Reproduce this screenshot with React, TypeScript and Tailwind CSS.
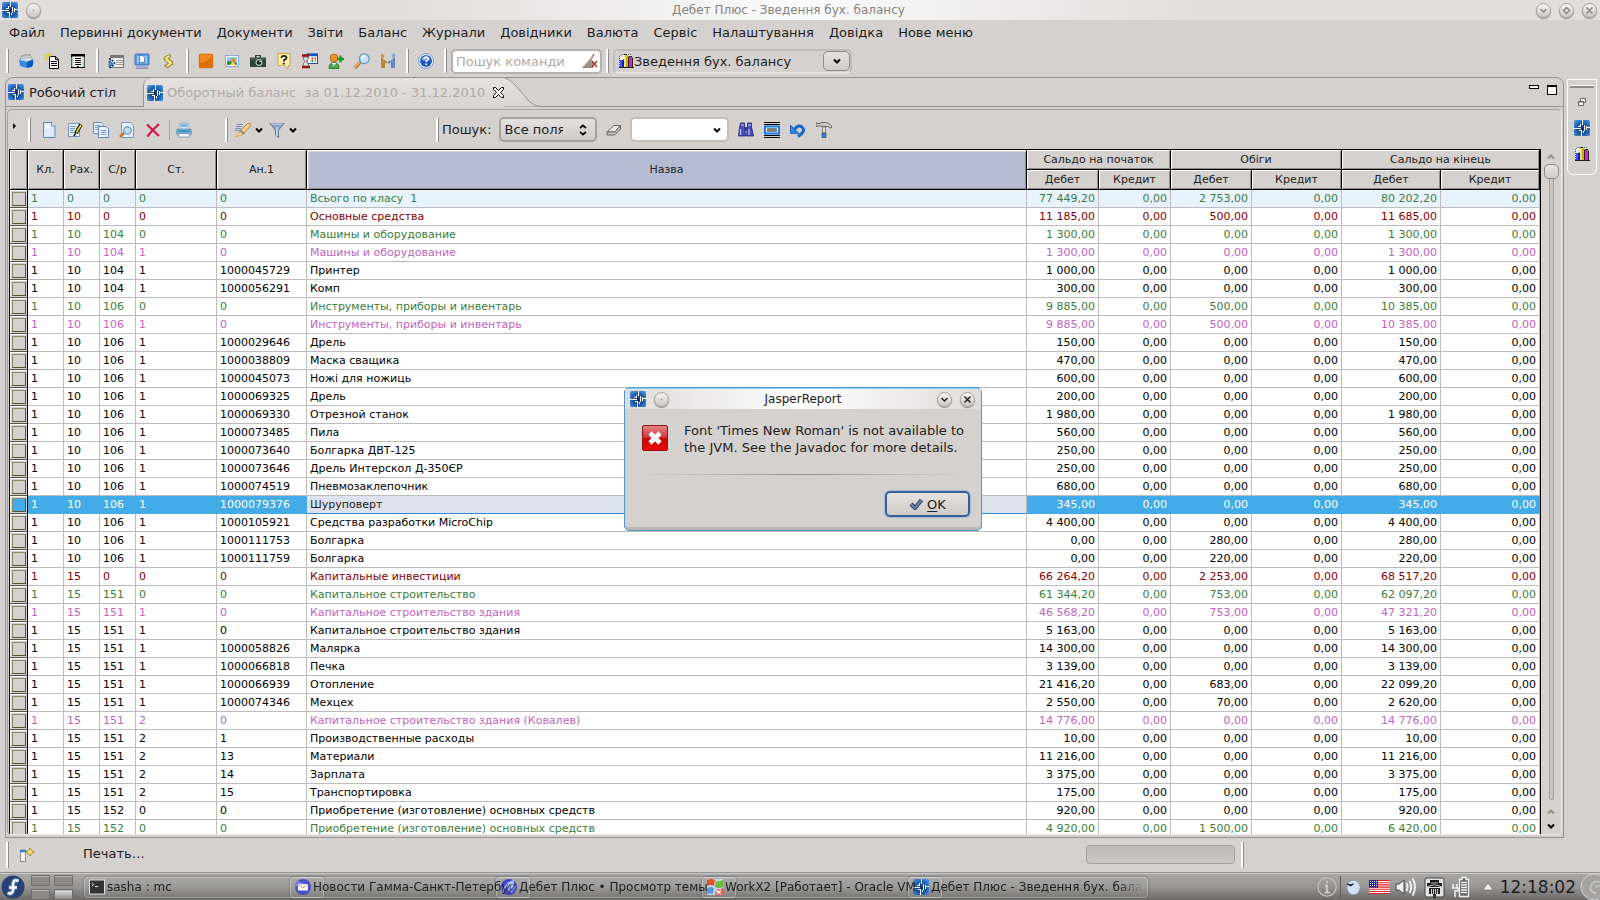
import { useState, type ReactNode } from 'react'

type Tone = 'g' | 'r' | 'p' | 'k'
type Row = [Tone, string, string, string, string, string, string, string, string, string]

// tone, account, subaccount, article, analytic, name, opening debit, turnover debit, closing debit, class
const rows: Row[] = [
  ['g', '0', '0', '0', '0', 'Всього по класу  1', '77 449,20', '2 753,00', '80 202,20', '1'],
  ['r', '10', '0', '0', '0', 'Основные средства', '11 185,00', '500,00', '11 685,00', '1'],
  ['g', '10', '104', '0', '0', 'Машины и оборудование', '1 300,00', '0,00', '1 300,00', '1'],
  ['p', '10', '104', '1', '0', 'Машины и оборудование', '1 300,00', '0,00', '1 300,00', '1'],
  ['k', '10', '104', '1', '1000045729', 'Принтер', '1 000,00', '0,00', '1 000,00', '1'],
  ['k', '10', '104', '1', '1000056291', 'Комп', '300,00', '0,00', '300,00', '1'],
  ['g', '10', '106', '0', '0', 'Инструменты, приборы и инвентарь', '9 885,00', '500,00', '10 385,00', '1'],
  ['p', '10', '106', '1', '0', 'Инструменты, приборы и инвентарь', '9 885,00', '500,00', '10 385,00', '1'],
  ['k', '10', '106', '1', '1000029646', 'Дрель', '150,00', '0,00', '150,00', '1'],
  ['k', '10', '106', '1', '1000038809', 'Маска сващика', '470,00', '0,00', '470,00', '1'],
  ['k', '10', '106', '1', '1000045073', 'Ножі для ножиць', '600,00', '0,00', '600,00', '1'],
  ['k', '10', '106', '1', '1000069325', 'Дрель', '200,00', '0,00', '200,00', '1'],
  ['k', '10', '106', '1', '1000069330', 'Отрезной станок', '1 980,00', '0,00', '1 980,00', '1'],
  ['k', '10', '106', '1', '1000073485', 'Пила', '560,00', '0,00', '560,00', '1'],
  ['k', '10', '106', '1', '1000073640', 'Болгарка ДВТ-125', '250,00', '0,00', '250,00', '1'],
  ['k', '10', '106', '1', '1000073646', 'Дрель Интерскол Д-350ЄР', '250,00', '0,00', '250,00', '1'],
  ['k', '10', '106', '1', '1000074519', 'Пневмозаклепочник', '680,00', '0,00', '680,00', '1'],
  ['k', '10', '106', '1', '1000079376', 'Шуруповерт', '345,00', '0,00', '345,00', '1'],
  ['k', '10', '106', '1', '1000105921', 'Средства разработки MicroChip', '4 400,00', '0,00', '4 400,00', '1'],
  ['k', '10', '106', '1', '1000111753', 'Болгарка', '0,00', '280,00', '280,00', '1'],
  ['k', '10', '106', '1', '1000111759', 'Болгарка', '0,00', '220,00', '220,00', '1'],
  ['r', '15', '0', '0', '0', 'Капитальные инвестиции', '66 264,20', '2 253,00', '68 517,20', '1'],
  ['g', '15', '151', '0', '0', 'Капитальное строительство', '61 344,20', '753,00', '62 097,20', '1'],
  ['p', '15', '151', '1', '0', 'Капитальное строительство здания', '46 568,20', '753,00', '47 321,20', '1'],
  ['k', '15', '151', '1', '0', 'Капитальное строительство здания', '5 163,00', '0,00', '5 163,00', '1'],
  ['k', '15', '151', '1', '1000058826', 'Малярка', '14 300,00', '0,00', '14 300,00', '1'],
  ['k', '15', '151', '1', '1000066818', 'Печка', '3 139,00', '0,00', '3 139,00', '1'],
  ['k', '15', '151', '1', '1000066939', 'Отопление', '21 416,20', '683,00', '22 099,20', '1'],
  ['k', '15', '151', '1', '1000074346', 'Мехцех', '2 550,00', '70,00', '2 620,00', '1'],
  ['p', '15', '151', '2', '0', 'Капитальное строительство здания (Ковалев)', '14 776,00', '0,00', '14 776,00', '1'],
  ['k', '15', '151', '2', '1', 'Производственные расходы', '10,00', '0,00', '10,00', '1'],
  ['k', '15', '151', '2', '13', 'Материали', '11 216,00', '0,00', '11 216,00', '1'],
  ['k', '15', '151', '2', '14', 'Зарплата', '3 375,00', '0,00', '3 375,00', '1'],
  ['k', '15', '151', '2', '15', 'Транспортировка', '175,00', '0,00', '175,00', '1'],
  ['k', '15', '152', '0', '0', 'Приобретение (изготовление) основных средств', '920,00', '0,00', '920,00', '1'],
  ['g', '15', '152', '0', '0', 'Приобретение (изготовление) основных средств', '4 920,00', '1 500,00', '6 420,00', '1'],
]

const toneClass: Record<Tone, string> = {
  g: 'text-[#3b7d3b]',
  r: 'text-[#850000]',
  p: 'text-[#c264c2]',
  k: 'text-black',
}

const menu = ['Файл', 'Первинні документи', 'Документи', 'Звіти', 'Баланс', 'Журнали', 'Довідники', 'Валюта', 'Сервіс', 'Налаштування', 'Довідка', 'Нове меню']

function Svg({ children, className = 'size-4' }: { children: ReactNode; className?: string }) {
  return (
    <svg viewBox="0 0 16 16" className={`shrink-0 ${className}`} aria-hidden="true">
      {children}
    </svg>
  )
}

function AppIcon() {
  return (
    <Svg>
      <defs>
        <radialGradient id="appBlue" cx="0.5" cy="0.55" r="0.75">
          <stop offset="0" stopColor="#0d2f66" />
          <stop offset="0.5" stopColor="#1f5fae" />
          <stop offset="1" stopColor="#55a4f2" />
        </radialGradient>
      </defs>
      <rect width="16" height="16" rx="1.5" fill="url(#appBlue)" />
      <path d="M0 8.500h7M8.500 0v5M7.500 10v6M9.500 11v2M10.500 5v6M12.500 6v4M13 7.500h3M4 6.500h3M5 10.500h2M6.500 4v2" stroke="#fff" strokeWidth="1" fill="none" />
    </Svg>
  )
}

function Chevron({ className = 'size-2', color = '#111' }: { className?: string; color?: string }) {
  return (
    <svg viewBox="0 0 8 8" className={`shrink-0 ${className}`} aria-hidden="true">
      <path d="M1 2.500 4 5.500 7 2.500" fill="none" stroke={color} strokeWidth="2.200" />
    </svg>
  )
}

function BarsIcon() {
  return (
    <Svg>
      <path d="M1.500 14V3.500l2-2H13" fill="none" stroke="#555" strokeDasharray="1 1" />
      <path d="M2 4 4 2h9v12H2z" fill="#e9e9e9" />
      <path d="M2 7h3v7H2z" fill="#2222d8" />
      <path d="M3 7v7" stroke="#7d7df4" />
      <path d="M6.500 2h3v12h-3z" fill="#f2e21c" />
      <path d="M9 2v12" stroke="#8a8210" />
      <path d="M11 4h3v10h-3z" fill="#e01ec8" />
      <path d="M5.500 6.500v8M10.500 3.500v11M14.500 4.500v10M1 14.500h15M6 1.500h3M11 3.500h3" stroke="#222" />
    </Svg>
  )
}

const mainIcons: { label: string; icon: ReactNode }[][] = [
  [
    {
      label: 'Відкрити базу',
      icon: (
        <Svg>
          <path d="M2 7 3.500 2.500 12 1.500l2.500 5L9 9z" fill="#e4e4e4" stroke="#8a8a8a" strokeWidth=".8" />
          <path d="M4 3.500 12 2.500M3.500 5.500l9-1" stroke="#999" strokeWidth=".8" />
          <path d="M1 6.500 9 8.500v6.500L3 13.500q-1.500-1-2-7z" fill="#2f8de8" />
          <path d="M9 8.500 15 6q1 6-1.500 8L9 15z" fill="#0b56b8" />
          <path d="M1 6.500 9 8.500 15 6" stroke="#8cc8ff" fill="none" />
        </Svg>
      ),
    },
    {
      label: 'Новий документ',
      icon: (
        <Svg>
          <path d="M5.500 3.500h6l3 3v9h-9z" fill="#fff" stroke="#000" />
          <path d="M11.500 3.500v3h3M7 8.500h6M7 10.500h6M7 12.500h6" stroke="#000" fill="none" />
          <path d="M4.500 0v3M0 4.500h3M1 1l2.500 2.500M8 1 5.500 3.500M1.500 7.500 4 5" stroke="#d2cc28" strokeWidth="1.200" />
        </Svg>
      ),
    },
    {
      label: 'Журнал',
      icon: (
        <Svg>
          <rect x="1.500" y="1.500" width="13" height="13" fill="#fff" stroke="#000" />
          <path d="M1 2.500h14" stroke="#000" strokeWidth="2" />
          <path d="M2.500 4v10M13.500 4v10" stroke="#aecbb8" strokeWidth="2" />
          <path d="M5 5.500h6M5 7.500h6M5 9.500h6M5 11.500h6M7 13.500h2" stroke="#000" />
        </Svg>
      ),
    },
  ],
  [
    {
      label: 'Список',
      icon: (
        <Svg>
          <rect x="2.500" y="2.500" width="13" height="12" fill="#eee" stroke="#777" />
          <path d="M3 4h12" stroke="#777" strokeWidth="2" />
          <path d="M8 7.500h7M8 9.500h7M8 11.500h7" stroke="#999" />
          <path d="M1 6q3 0 5.500 4.500Q4 14 1 15" stroke="#1d4b80" strokeWidth="1.800" strokeDasharray="2 1" fill="none" />
          <path d="M1 8q4 2 4 3t-4 3z" fill="#4c8ccc" stroke="#1d4b80" strokeWidth=".6" />
        </Svg>
      ),
    },
    {
      label: 'Робоче місце',
      icon: (
        <Svg>
          <rect x="1" y="1" width="14" height="11" rx="1" fill="#5a9ee8" stroke="#2b62b4" strokeWidth=".8" />
          <rect x="3" y="3" width="10" height="7" fill="#8ec4f8" />
          <path d="M5.500 2.500h3l2 2v5h-5z" fill="#fff" stroke="#4670a8" strokeWidth=".8" />
          <path d="M2 14.500h12" stroke="#7684b8" strokeWidth="2.500" />
          <path d="M2 14h12" stroke="#c8d0ee" />
        </Svg>
      ),
    },
    {
      label: 'Сценарій',
      icon: (
        <Svg>
          <path d="M4 4.500 9.500 1.500 11 3 8.500 6 12.500 8.500 13 11 7 15 4.500 12.500 8.500 10.500 4.500 7.500z" fill="#d9c650" stroke="#84781f" strokeWidth=".9" />
          <path d="M5.500 5 9 3M6 6.500l5 3.500-4 3" stroke="#fdf6b0" strokeWidth="1.300" fill="none" />
        </Svg>
      ),
    },
  ],
  [
    {
      label: 'Стоп',
      icon: (
        <Svg>
          <rect x=".5" y=".5" width="15" height="15" rx="1.500" fill="#f48a1c" stroke="#fff" />
          <rect x="1" y="1" width="14" height="14" rx="1" fill="none" stroke="#a55412" strokeWidth=".8" />
          <path d="M2 10q6-1 12-7v11H2z" fill="#e06e08" />
        </Svg>
      ),
    },
    {
      label: 'Зображення',
      icon: (
        <Svg>
          <rect x="1.500" y="2.500" width="13" height="11" fill="#fff" stroke="#86a8d4" />
          <rect x="3" y="4" width="10" height="8" fill="#90c8f4" />
          <path d="M3 8q4 0 10 2v2H3z" fill="#268c34" />
          <circle cx="9" cy="7.500" r="2.200" fill="#f08428" />
          <path d="M6 12 8.500 8.500 12 12z" fill="#f2d850" />
        </Svg>
      ),
    },
    {
      label: 'Знімок',
      icon: (
        <Svg>
          <path d="M0 4.500h5V2h6v2.500h5V14H0z" fill="#2d4437" />
          <path d="M1 6h14" stroke="#56705f" />
          <circle cx="9" cy="9.500" r="3.500" fill="#b4c2ba" />
          <circle cx="9" cy="9.500" r="2.300" fill="#17241c" />
          <circle cx="10" cy="8.500" r=".8" fill="#cfe" />
          <rect x="6.500" y="3" width="3" height="1.500" fill="#cfd8d2" />
        </Svg>
      ),
    },
    {
      label: 'Підказка',
      icon: (
        <Svg>
          <path d="M2 .5h12v12h-2V16L8.500 12.500H2z" fill="#fff0a8" stroke="#c89c3c" strokeWidth=".9" />
          <path d="M5.500 5q0-2.200 2.500-2.200T10.500 5Q10.500 6.200 8 7v1.500M8 9.800v1.600" fill="none" stroke="#222" strokeWidth="1.800" />
        </Svg>
      ),
    },
    {
      label: 'Планувальник',
      icon: (
        <Svg>
          <rect x="5" y="1" width="10.500" height="9.500" fill="#fff" stroke="#1554b4" />
          <path d="M5 2h11" stroke="#1554b4" strokeWidth="2.500" />
          <path d="M9.500 5.500h1.500M12.500 5.500H14" stroke="#d22" strokeWidth="2" />
          <path d="M9.500 8h1.500" stroke="#1a8e30" strokeWidth="2" />
          <path d="M12.500 8H14" stroke="#e8a428" strokeWidth="2" />
          <path d="M0 2.500h7M0 14h8" stroke="#9c1010" strokeWidth="2.500" />
          <path d="M1 4h5.500q0 2.500-2 4.500 2 2 2.500 4.500H1q0-3 2-4.500Q1 6.500 1 4z" fill="#dedede" stroke="#7c4646" strokeWidth=".8" />
        </Svg>
      ),
    },
    {
      label: 'Додати користувача',
      icon: (
        <Svg>
          <path d="M1 15.500q0-6 5-6t5 6z" fill="#4bab48" stroke="#226e26" strokeWidth=".8" />
          <circle cx="6" cy="5" r="4" fill="#e8902c" stroke="#a8591a" strokeWidth=".7" />
          <path d="m4 10 2 3 2-3" fill="#fff" />
          <path d="M12.500 2.500v7M9 6h7" stroke="#1c9a24" strokeWidth="2.400" />
        </Svg>
      ),
    },
    {
      label: 'Пошук',
      icon: (
        <Svg>
          <path d="M1 15 6.500 9" stroke="#b66a1c" strokeWidth="3" />
          <path d="M1 14.500 6 9" stroke="#f6be5c" strokeWidth="1.200" />
          <circle cx="10.300" cy="5.700" r="4.800" fill="#c6e4fb" stroke="#6d98c6" strokeWidth="1.300" />
          <path d="M7.500 5q1-2.500 4-2.300" stroke="#fff" strokeWidth="1.400" fill="none" />
        </Svg>
      ),
    },
    {
      label: 'Контрагенти',
      icon: (
        <Svg>
          <circle cx="2.500" cy="3" r="1.900" fill="#c49a3c" />
          <path d="M2 5v10M4 9v6M3 7l4 3" stroke="#b48a30" strokeWidth="2" />
          <circle cx="13.500" cy="2.500" r="1.900" fill="#84a6da" />
          <path d="M14 4.500V15M12 9v6M13 7 8 10" stroke="#6288c4" strokeWidth="2" />
        </Svg>
      ),
    },
  ],
  [
    {
      label: 'Допомога',
      icon: (
        <Svg>
          <circle cx="8" cy="8" r="7.500" fill="#fff" stroke="#7492c8" strokeWidth="1" />
          <circle cx="8" cy="8" r="6" fill="#1b55c4" />
          <path d="M3 7q2-5 10-1-4 3-10 1z" fill="#6b9cf0" />
          <path d="M5.800 6.200q.2-2 2.300-2t2.200 1.900Q10.300 7.300 8.200 8v1.200M8.200 10.500v1.700" fill="none" stroke="#fff" strokeWidth="1.700" />
        </Svg>
      ),
    },
  ],
]

const tableIcons: { label: string; icon: ReactNode }[] = [
  {
    label: 'Створити',
    icon: (
      <Svg>
        <path d="M2.500.5h8l3.500 3.500v11.500H2.500z" fill="#dce9fb" stroke="#5d86c2" />
        <path d="M4 2h5v5H4z" fill="#f4f9ff" />
        <path d="M10.500.5V4H14" fill="#fff" stroke="#5d86c2" />
      </Svg>
    ),
  },
  {
    label: 'Редагувати',
    icon: (
      <Svg>
        <path d="M1.500 1.500h11v13h-11z" fill="#e4effd" stroke="#7896c4" />
        <path d="M3 4.500h6M3 6.500h5M3 8.500h4M3 10.500h4" stroke="#7896c4" />
        <path d="M14 2.500 9 11" stroke="#000" strokeWidth="3.600" />
        <path d="M14 3 9 11" stroke="#f0dc1e" strokeWidth="1.800" />
        <path d="m9 10-2 4" stroke="#000" strokeWidth="1.500" />
      </Svg>
    ),
  },
  {
    label: 'Копіювати',
    icon: (
      <Svg>
        <path d="M.5.500H8l2 2v9H.5z" fill="#e4effd" stroke="#6a8cc0" />
        <path d="M2 3.500h5M2 5.500h4M2 7.500h4" stroke="#7c9acb" />
        <path d="M5.500 4.500H13l2.500 2.500v8.500h-10z" fill="#eef5ff" stroke="#5d86c2" />
        <path d="M7.500 8.500h6M7.500 10.500h6M7.500 12.500h6" stroke="#7c9acb" />
      </Svg>
    ),
  },
  {
    label: 'Перегляд',
    icon: (
      <Svg>
        <path d="M2.500.500h9l3 3v12h-12z" fill="#e4effd" stroke="#7896c4" />
        <path d="m1 15 4-4" stroke="#bd7428" strokeWidth="2.500" />
        <circle cx="8.500" cy="8.500" r="3.700" fill="#bfe0f8" stroke="#6f95b8" strokeWidth="1.200" />
      </Svg>
    ),
  },
  { label: 'Видалити', icon: <Svg><path d="M2 2.500q4 4 12 11.500M14 2Q7 8 2.500 14.500" fill="none" stroke="#d41244" strokeWidth="2.200" /></Svg> },
]

function PrinterIcon() {
  return (
    <Svg>
      <path d="M4 1h8v7H4z" fill="#d4e8f6" stroke="#9ab" strokeWidth=".8" />
      <path d="M5 2h6v3H5z" fill="#78b8e4" />
      <rect x="0" y="6.500" width="16" height="7" rx="1.500" fill="#97a8b6" />
      <path d="M1.500 7.500h13v3h-13z" fill="#3f9ad8" />
      <path d="M3 11.500h10L14 15H2z" fill="#eaf5fd" stroke="#7c95ac" strokeWidth=".8" />
    </Svg>
  )
}

function Grip({ tall = false }: { tall?: boolean }) {
  return <span className={`w-[3px] shrink-0 border-l-2 border-r border-l-white border-r-[#8f8c89] ${tall ? 'h-[26px]' : 'h-6'}`} />
}

function RoundButton({ label, children }: { label: string; children?: ReactNode }) {
  return (
    <button
      aria-label={label}
      className="flex size-[15px] shrink-0 items-center justify-center rounded-full border border-[#a5a19e] bg-linear-to-b from-[#f6f5f5] to-[#cbc8c5] shadow-[0_1px_1px_#8d8a88]"
    >
      <svg viewBox="0 0 9 9" className="size-[9px]" fill="none" strokeWidth="1.500">
        {children}
      </svg>
    </button>
  )
}

const thBase = 'border-r border-b border-black bg-[#d5d1ce] p-0 font-normal shadow-[inset_1px_1px_0_#fff,inset_-1px_-1px_0_#8f8c8a]'

function BalanceTable() {
  const [selected, setSelected] = useState(17)
  return (
    <table className="w-full table-fixed border-separate border-spacing-0 border-t border-l border-black bg-white text-[11px] leading-[16px] text-[#222]">
      <colgroup>
        <col className="w-[18px]" />
        <col className="w-9" />
        <col className="w-9" />
        <col className="w-9" />
        <col className="w-[81px]" />
        <col className="w-[90px]" />
        <col />
        <col className="w-[72px]" />
        <col className="w-[72px]" />
        <col className="w-[81px]" />
        <col className="w-[90px]" />
        <col className="w-[99px]" />
        <col className="w-[99px]" />
      </colgroup>
      <thead>
        <tr className="h-5">
          <th rowSpan={2} className={thBase} aria-label="Вибір" />
          {['Кл.', 'Рах.', 'С/р', 'Ст.', 'Ан.1'].map((h) => (
            <th key={h} rowSpan={2} className={thBase}>{h}</th>
          ))}
          <th rowSpan={2} className="border-r border-b border-black bg-[#b5bbd2] p-0 font-normal shadow-[inset_1px_1px_0_#fff,inset_2px_2px_0_#d5d1ce,inset_-1px_-1px_0_#8f8c8a]">Назва</th>
          {['Сальдо на початок', 'Обіги', 'Сальдо на кінець'].map((h) => (
            <th key={h} colSpan={2} className={thBase}>{h}</th>
          ))}
        </tr>
        <tr className="h-5">
          {[0, 1, 2].map((g) =>
            ['Дебет', 'Кредит'].map((h) => (
              <th key={g + h} className={thBase}>{h}</th>
            )),
          )}
        </tr>
      </thead>
      <tbody>
        {rows.map((row, i) => {
          const [tone, acc, sub, art, an, name, open, turn, close, cls] = row
          const on = i === selected
          const cell = on
            ? 'border-r border-b border-[#43ace8] bg-[#43ace8] text-white'
            : `border-r border-b border-[#bdbdbd] ${i === 0 ? 'bg-[#e9f3ff]' : ''} ${toneClass[tone]}`
          return (
            <tr key={i} className="h-[18px]" onClick={() => setSelected(i)}>
              <td className="border-r border-b border-r-black border-b-[#55534f] bg-[#d5d1ce] p-px shadow-[inset_1px_1px_0_#fff]">
                <button
                  aria-label={`Рядок ${i + 1}`}
                  className={`mx-auto block size-[14px] border border-t-[#8d8a6c] border-r-[#55532f] border-b-[#55532f] border-l-[#8d8a6c] ${on ? 'bg-[#43ace8]' : 'bg-[#d5d1ce]'}`}
                />
              </td>
              {[cls, acc, sub, art, an].map((v, c) => (
                <td key={c} className={`${cell} px-[3px] py-0`}>{v}</td>
              ))}
              <td className={`border-r border-b px-[3px] py-0 whitespace-pre ${on ? 'border-r-[#bdbdbd] border-b-[#2f86dc] bg-[#dde2ee] text-[#222]' : cell}`}>{name}</td>
              {[open, '0,00', turn, '0,00', close, '0,00'].map((v, c) => (
                <td key={c} className={`${cell} px-[3px] py-0 text-right`}>{v}</td>
              ))}
            </tr>
          )
        })}
      </tbody>
    </table>
  )
}

function Scrollbar() {
  return (
    <div className="flex w-4 flex-col items-center pt-1 pb-1">
      <Chevron className="size-2 rotate-180" color="#96928f" />
      <span className="mt-[3px] size-[15px] rounded-[5px] border border-[#8f8b88] bg-linear-to-b from-[#e6e3e1] to-[#d0ccc9]" />
      <span className="w-[5px] flex-1 rounded-b-sm border border-t-0 border-[#a29e9b] bg-[#cbc7c4]" />
      <Chevron className="mt-2 size-2 rotate-180" color="#96928f" />
      <Chevron className="mt-[6px] size-2" />
    </div>
  )
}

function ErrorDialog({ onClose }: { onClose: () => void }) {
  return (
    <div
      role="dialog"
      aria-label="JasperReport"
      className="absolute top-[387px] left-[624px] flex h-[144px] w-[358px] flex-col rounded-[5px] border border-[#4a9bcb] bg-[#d5d1ce] shadow-[inset_0_1px_0_#8fd0f5,inset_0_-3px_0_#bcb5b2]"
    >
      <div className="mt-px flex h-5 items-center gap-2 bg-[linear-gradient(to_right,#dfdcdb,#fff,#dfdcdb)] pr-[6px] pl-[5px]">
        <AppIcon />
        <RoundButton label="Меню вікна"><circle cx="4.500" cy="4.500" r=".7" fill="#777" /></RoundButton>
        <span className="flex-1 text-center text-[12px] text-[#222]">JasperReport</span>
        <RoundButton label="Згорнути"><path d="M1.500 3 4.500 6 7.500 3" stroke="#222" /></RoundButton>
        <RoundButton label="Закрити"><path d="m1.500 1.500 6 6M7.500 1.500l-6 6" stroke="#222" /></RoundButton>
      </div>
      <div className="flex items-start gap-4 pt-[13px] pl-[17px]">
        <svg viewBox="0 0 26 26" className="mt-[3px] size-[26px] shrink-0" aria-hidden="true">
          <defs>
            <linearGradient id="err" x1="0" x2="0" y1="0" y2="1">
              <stop offset="0" stopColor="#e08a8a" />
              <stop offset=".48" stopColor="#d03434" />
              <stop offset=".5" stopColor="#c40808" />
              <stop offset="1" stopColor="#f00808" />
            </linearGradient>
          </defs>
          <rect x=".5" y=".5" width="25" height="25" rx="1.500" fill="url(#err)" stroke="#8e1616" />
          <path d="m8 8 10 10M18 8 8 18" stroke="#fff" strokeWidth="4.600" />
        </svg>
        <p className="leading-[17px] whitespace-nowrap text-[#222]">
          Font 'Times New Roman' is not available to
          <br />
          the JVM. See the Javadoc for more details.
        </p>
      </div>
      <div className="mx-4 mt-[18px] h-px shrink-0 bg-linear-to-r from-transparent via-[#969290] to-transparent" />
      <div className="flex justify-end pt-4 pr-[11px]">
        <button
          onClick={onClose}
          className="flex h-[26px] w-[85px] items-center justify-center gap-1 rounded-[5px] border-2 border-[#33619c] bg-linear-to-b from-[#e4e1df] to-[#cfcbc8] text-[#222] shadow-[0_0_1px_1px_#a9bcd4]"
        >
          <svg viewBox="0 0 14 12" className="h-3 w-[14px]" aria-hidden="true">
            <path d="m2 6 4 4 6.500-8" fill="none" stroke="#22374e" strokeWidth="4" />
            <path d="m2 6 4 4 6.500-8" fill="none" stroke="#5d83ab" strokeWidth="2.400" />
          </svg>
          <span><span className="underline underline-offset-2">O</span>K</span>
        </button>
      </div>
    </div>
  )
}

const tasks: { title: string; icon: ReactNode }[] = [
  {
    title: 'sasha : mc',
    icon: <Svg><rect x=".5" y="1" width="15" height="14" fill="#333" stroke="#ddd" /><path d="m3 4 1.500 1.500L3 7M6 7.500h3" stroke="#fff" fill="none" /></Svg>,
  },
  {
    title: 'Новости Гамма-Санкт-Петербур',
    icon: <Svg><circle cx="8" cy="8" r="8" fill="#4a4fc0" /><path d="M0 8a8 8 0 0 1 3-6q3 3 10 0" fill="#7c86e8" /><rect x="3" y="5" width="10" height="6.500" rx="1" fill="#fff" /><path d="m3 5.500 5 3.500 5-3.500" stroke="#99a" fill="none" /></Svg>,
  },
  {
    title: 'Дебет Плюс • Просмотр темы',
    icon: <Svg><circle cx="8" cy="8" r="8" fill="#3f44c4" /><path d="M2 13Q3 3 13 1q1 8-6 11 0-4 3-7-5 3-8 8z" fill="#a9c4f6" /><path d="M9 13q4-1 5-6" stroke="#8a9cf0" strokeWidth="2" fill="none" /></Svg>,
  },
  {
    title: 'WorkX2 [Работает] - Oracle VM',
    icon: <Svg><rect width="16" height="16" fill="#c4d8e8" /><path d="M0 1q4-2 8 0l-1 6Q4 5 0 7z" fill="#e8502c" /><path d="M9 2q3 1 7-1v7q-4 2-8 0z" fill="#6cb83c" /><path d="M0 9q4-2 7 0l-1 6q-3-1-6 0z" fill="#5a9ae4" /><path d="M9 10q4 1 7-1v7H8z" fill="#e05a50" /><path d="m9 11 5 4M14 11l-4 4" stroke="#fff" strokeWidth="1.200" /></Svg>,
  },
  { title: 'Дебет Плюс - Зведення бух. балан', icon: <AppIcon /> },
]

function Taskbar() {
  return (
    <footer className="flex h-[27px] shrink-0 items-center border-t border-[#c9c9c9] bg-linear-to-b from-[#a8a7a6] via-[#969594] to-[#6b6a69] pl-px">
      <button aria-label="Меню запуску" className="shrink-0">
        <svg viewBox="0 0 24 24" className="size-6" aria-hidden="true">
          <circle cx="12" cy="12" r="11.500" fill="#294172" />
          <path d="M17.500 6.500q-5-3-5.500 3V15q-.5 4.500-5 3.500M7.500 12.500H16" fill="none" stroke="#3c6eb4" strokeWidth="5" />
          <path d="M17.500 6q-5-2.500-5.500 3v6q-.5 4.500-5.500 3M8 12.500h8" fill="none" stroke="#fff" strokeWidth="2.600" />
        </svg>
      </button>
      <div className="ml-[6px] grid shrink-0 grid-cols-[19px_19px] gap-x-1 gap-y-[3px]">
        {[1, 2, 3, 4].map((d) => (
          <button key={d} aria-label={`Стільниця ${d}`} className={`h-[11px] rounded-[1px] border border-[#6f6e6d] shadow-[inset_0_1px_0_#b9b9b9] ${d === 4 ? 'bg-linear-to-b from-[#e2e2e2] to-[#8c8b8a]' : 'bg-[#8c8b8a]'}`} />
        ))}
      </div>
      <div className="ml-[11px] flex">
        {tasks.map((t) => (
          <button
            key={t.title}
            className="-mr-[34px] flex h-[21px] w-[240px] shrink-0 items-center gap-[2px] overflow-hidden rounded-[4px] border border-white/30 bg-white/5 px-1 text-[12px] text-[#222] shadow-[0_0_2px_#555]"
          >
            {t.icon}
            <span className="min-w-0 flex-1 overflow-hidden mask-[linear-gradient(to_right,#000_88%,transparent)] text-left whitespace-nowrap">{t.title}</span>
          </button>
        ))}
      </div>
      <div className="ml-auto flex shrink-0 items-center">
        <Svg className="mr-[3px] size-5"><circle cx="8" cy="8" r="7.300" fill="none" stroke="#c3c2c1" strokeWidth="1" /><path d="M8 3v2M6.500 7H8v5.500M6 12.500h4.500" stroke="#ccc" strokeWidth="1.500" fill="none" /></Svg>
        <span className="mr-[5px] h-[22px] w-px bg-[#5f5e5d]" />
        <Svg className="mr-2 size-[15px]"><ellipse cx="8" cy="8" rx="7" ry="7.800" fill="#d4e0f4" stroke="#8090b0" strokeWidth=".8" /><path d="M1 4l4 2 3-2M4 5l3 0" stroke="#222" strokeWidth="1.400" fill="none" /></Svg>
        <svg viewBox="0 0 21 14" className="mr-[5px] h-[14px] w-[21px] shrink-0" aria-hidden="true">
          <rect width="21" height="14" fill="#fff" />
          <path d="M0 .5h21M0 2.700h21M0 4.900h21M0 7.100h21M0 9.300h21M0 11.500h21M0 13.500h21" stroke="#e01c24" strokeWidth="1.100" />
          <rect width="9" height="7.500" fill="#20248c" />
          <path d="M1 1.500h8M1 3.500h8M1 5.500h8" stroke="#fff" strokeDasharray="1 1" />
        </svg>
        <svg viewBox="0 0 23 22" className="mr-[6px] h-[22px] w-[23px] shrink-0" fill="none" stroke="#eee" strokeWidth="2" aria-hidden="true">
          <path d="M1 8h3l5-4v14l-5-4H1z" fill="#eee" stroke="#444" strokeWidth="1" />
          <path d="M11.500 7q2 4 0 8M14.500 5q3.500 6 0 12M17.500 2.500q5 8.500 0 17" />
        </svg>
        <svg viewBox="0 0 21 21" className="mr-[6px] size-[21px] shrink-0" aria-hidden="true">
          <rect x="1" y="1" width="19" height="19" rx="2" fill="#e4e4e4" stroke="#444" strokeWidth="1" />
          <path d="M6 3h9v3h3v4H3V6h3z" fill="#1c1c1c" />
          <path d="M3 10q7-4 15 0M7 6h7" stroke="#bbb" fill="none" strokeWidth="1.200" />
          <path d="M5 11h11v6H5z" fill="#222" />
          <path d="M7.500 12v5M9.500 12v5M11.500 12v5M13.500 12v5" stroke="#ccc" />
          <path d="M9 17h3v4H9z" fill="#333" />
        </svg>
        <svg viewBox="0 0 19 22" className="mr-3 h-[22px] w-[19px] shrink-0" fill="none" stroke="#f0f0f0" aria-hidden="true">
          <path d="M8.500 3.500H11v-2h4v2h2.500v17h-9z" fill="#666" strokeWidth="1.300" />
          <path d="M10 6.500h6M10 9h6M10 11.500h6M10 14h6M10 16.500h6" strokeWidth="1.500" />
          <path d="M2 8v4M6 8v4M1 12h6v3H4v6" strokeWidth="1.500" />
        </svg>
        <svg viewBox="0 0 12 10" className="mr-[6px] h-[10px] w-3 shrink-0" aria-hidden="true"><path d="M6 1 11 8H1z" fill="#eee" stroke="#666" strokeWidth=".6" /></svg>
        <time className="text-[17px] leading-5 text-[#1e1e1e]">12:18:02</time>
        <svg viewBox="0 0 20 26" className="ml-1 h-[26px] w-5 shrink-0" aria-hidden="true">
          <circle cx="14" cy="13" r="13" fill="#a5a4a3" stroke="#d0d0d0" />
          <path d="M20 8q-7-2-9 4t5 7M20 12q-3-1-4 2" stroke="#c9c9c9" fill="none" strokeWidth="1.500" />
        </svg>
      </div>
    </footer>
  )
}

export default function App() {
  const [dialog, setDialog] = useState(true)
  return (
    <div className="relative flex h-screen flex-col overflow-hidden bg-[#d5d1ce] font-['DejaVu_Sans',sans-serif] text-[13px] leading-[17px] text-[#1e1e1e]">
      <header className="flex h-5 shrink-0 items-center gap-2 bg-[linear-gradient(to_right,#e1dedd_25%,#fbfbfb_50%,#e1dedd_75%)] pr-[3px] pl-[2px]">
        <AppIcon />
        <RoundButton label="Меню вікна"><circle cx="4.500" cy="4.500" r=".7" fill="#888" /></RoundButton>
        <h1 className="flex-1 text-center text-[12px] text-[#858381]">Дебет Плюс - Зведення бух. балансу</h1>
        <RoundButton label="Згорнути"><path d="M1.500 3 4.500 6 7.500 3" stroke="#8a8684" /></RoundButton>
        <RoundButton label="Розгорнути"><path d="M4.500 1.500 7.500 4.500 4.500 7.500 1.500 4.500z" stroke="#8a8684" /></RoundButton>
        <RoundButton label="Закрити"><path d="m1.500 1.500 6 6M7.500 1.500l-6 6" stroke="#8a8684" /></RoundButton>
      </header>

      <nav className="flex h-[25px] shrink-0 items-center gap-[15px] px-[9px]">
        {menu.map((m) => (
          <button key={m}>{m}</button>
        ))}
      </nav>

      <div className="flex h-8 shrink-0 items-center pl-[6px]">
        {mainIcons.map((group, g) => (
          <div key={g} className="flex items-center pr-[5px]">
            <Grip />
            <div className="ml-1 flex">
              {group.map((b) => (
                <button key={b.label} aria-label={b.label} className="flex h-6 w-[26px] items-center justify-center">{b.icon}</button>
              ))}
            </div>
          </div>
        ))}
        <Grip />
        <div className="ml-1 flex h-[25px] w-[151px] items-center rounded-[5px] border-2 border-[#b5b1ae] bg-white pr-[2px] pl-[3px]">
          <input aria-label="Пошук команди" placeholder="Пошук команди" className="min-w-0 flex-1 bg-transparent outline-none placeholder:text-[#b0aaa6]" />
          <Svg>
            <path d="M0 15 8 6l4 4-1 5z" fill="#948c84" />
            <path d="M1 13h9M3 11h8M5 9h6" stroke="#b8b0a8" strokeDasharray="1 1" />
            <path d="m8 8 4-7" stroke="#a08c80" strokeWidth="1.600" />
            <path d="m10 8 5 6M15 8l-5 6" stroke="#a83c3c" strokeWidth="1.500" />
          </Svg>
        </div>
        <span className="ml-1 flex"><Grip /></span>
        <label className="ml-1 flex h-[25px] w-[239px] items-center rounded-[5px] border-2 border-[#c0bcb9] border-b-[#e6e4e2] pl-[3px]">
          <BarsIcon />
          <select aria-label="Перспектива" className="min-w-0 flex-1 appearance-none bg-transparent outline-none">
            <option>Зведення бух. балансу</option>
          </select>
          <span className="flex h-5 w-[27px] items-center justify-center rounded-[5px] border border-[#8f8b88] bg-linear-to-b from-[#e4e1df] to-[#cfcbc8]"><Chevron /></span>
        </label>
      </div>

      <div className="flex min-h-0 flex-1">
        <main className="ml-[5px] flex min-w-0 flex-1 flex-col rounded-t-[8px] border border-[#979390]">
          <div className="flex h-[29px] shrink-0 border-b border-[#979390]">
            <button className="flex w-[137px] items-center gap-[5px] pl-[2px]"><AppIcon />Робочий стіл</button>
            <div className="-mb-px flex h-[29px] items-center rounded-tl-[8px] border-l border-[#979390] bg-linear-to-b from-[#e4e2e0] to-[#d8d4d1] pl-[3px]">
              <AppIcon />
              <button className="ml-1 whitespace-pre text-[#b0aaa6]">Оборотный баланс  за 01.12.2010 - 31.12.2010</button>
              <button aria-label="Закрити вкладку" className="ml-2">
                <svg viewBox="0 0 11 11" className="size-[11px]" aria-hidden="true"><path d="M.5.5h2l3 3 3-3h2v2l-3 3 3 3v2h-2l-3-3-3 3h-2v-2l3-3-3-3z" fill="#fff" stroke="#000" /></svg>
              </button>
            </div>
            <svg viewBox="0 0 38 29" className="-mb-px h-[29px] w-[38px] shrink-0" aria-hidden="true">
              <defs>
                <linearGradient id="tab" x1="0" x2="0" y1="0" y2="1"><stop offset="0" stopColor="#e4e2e0" /><stop offset="1" stopColor="#d8d4d1" /></linearGradient>
              </defs>
              <path d="M0 0Q6 1 12 8L24 22Q30 28 38 28.500H0z" fill="url(#tab)" />
              <path d="M0 -.5Q6 1 12 8L24 22Q30 28.500 38 28.500" fill="none" stroke="#979390" />
            </svg>
            <div className="ml-auto flex gap-2 pt-[7px] pr-[6px]">
              <button aria-label="Мінімізувати" className="h-1 w-[10px] border border-black bg-white" />
              <button aria-label="Максимізувати" className="size-[10px] border border-t-2 border-black bg-white" />
            </div>
          </div>

          <div className="mx-px mt-[2px] mb-[2px] flex min-h-0 flex-1 flex-col rounded-[5px] border border-t-[#a5a19e] border-r-[#eceae9] border-b-[#eceae9] border-l-[#a5a19e]">
            <div className="flex h-[39px] shrink-0 items-center">
              <svg viewBox="0 0 4 6" className="mb-2 ml-[5px] h-[6px] w-1" aria-hidden="true"><path d="M0 0 3 3 0 6z" /></svg>
              <span className="ml-[11px] flex"><Grip /></span>
              <div className="ml-[5px] flex">
                {tableIcons.map((b) => (
                  <button key={b.label} aria-label={b.label} className="flex h-6 w-[26px] items-center justify-center">{b.icon}</button>
                ))}
              </div>
              <span className="mx-[3px] h-5 w-px bg-[#a9a5a2]" />
              <button aria-label="Друк" className="ml-[3px]"><PrinterIcon /></button>
              <span className="ml-[33px] flex"><Grip /></span>
              <button aria-label="Очистити" className="ml-[7px] flex items-center gap-1">
                <Svg>
                  <path d="M2 2.500h6M1 4.500h6M0 6.500h6M0 8.500h5" stroke="#7c8eb8" />
                  <path d="m1 15 4-6 3 3z" fill="#f8d88c" stroke="#c89838" strokeWidth=".7" />
                  <path d="m5 9 8-8q3 0 2.500 3L8 12z" fill="#f6cf86" stroke="#a8743c" strokeWidth=".8" />
                  <path d="m5 8 4 4" stroke="#888" strokeWidth="2" />
                </Svg>
                <Chevron />
              </button>
              <button aria-label="Фільтр" className="ml-[6px] flex items-center gap-1">
                <Svg><path d="M1 1.500h14L9.500 8v7.500L6.500 13V8z" fill="#8ea0c8" stroke="#4e5f8c" strokeWidth=".8" /><path d="M2 2h12" stroke="#dce6f8" /><path d="M8 5v9" stroke="#dfe6f6" strokeWidth="1.300" /></Svg>
                <Chevron />
              </button>
              <span className="ml-[139px] flex"><Grip /></span>
              <label htmlFor="field" className="ml-[3px]">Пошук:</label>
              <div className="ml-[7px] flex h-[25px] w-[98px] items-center rounded-[5px] border-2 border-[#a5a19e] bg-linear-to-b from-[#e4e1df] to-[#cfcbc8] pr-2 pl-1">
                <select id="field" className="w-[58px] appearance-none overflow-hidden bg-transparent outline-none"><option>Все поля</option></select>
                <svg viewBox="0 0 8 12" className="ml-auto h-3 w-2" aria-hidden="true"><path d="M1 4 4 1.500 7 4M1 8 4 10.500 7 8" fill="none" stroke="#111" strokeWidth="1.800" /></svg>
              </div>
              <button aria-label="Стерти" className="ml-[9px]">
                <Svg><path d="M1 10 8 3.500h6.500L9 10z" fill="#e8e8e8" stroke="#666" /><path d="M1 10v3h7.500l6-6V3.500L9 10z" fill="#c4c4c4" stroke="#666" /></Svg>
              </button>
              <div className="ml-2 flex h-[25px] w-[99px] items-center rounded-[5px] border-2 border-[#c3bfbc] bg-white pr-[6px] pl-1">
                <input aria-label="Текст пошуку" className="min-w-0 flex-1 outline-none" />
                <Chevron />
              </div>
              <div className="ml-1 flex">
                <button aria-label="Знайти" className="flex h-6 w-[26px] items-center justify-center">
                  <Svg><path d="M2.500 1h4v4l1 9H.500l1-8zM9.500 1h4v4l2 9H8.500l1-8z" fill="#4a4cc0" stroke="#20206c" strokeWidth=".8" /><path d="M7 5h2v4H7z" fill="#34349c" /><path d="M2.500 7v6M11 7v6" stroke="#b8bcf4" strokeWidth="1.300" /><path d="M3 3h3M10 3h3" stroke="#d4d8fc" /></Svg>
                </button>
                <button aria-label="Рядки" className="flex h-6 w-[26px] items-center justify-center">
                  <Svg><path d="M0 .5h16M0 2.500h16M0 13.500h16M0 15.500h16" stroke="#000" /><rect x="1" y="4.500" width="14" height="7" fill="#fff" stroke="#1878f0" strokeWidth="2" /><path d="M3 7h10M3 9h10" stroke="#000" /></Svg>
                </button>
                <button aria-label="Оновити" className="flex h-6 w-[26px] items-center justify-center">
                  <Svg><path d="M4 8q4-6 8-3 4.500 4-4 9.500" fill="none" stroke="#1467c8" strokeWidth="3" /><path d="M.5 3v8.500H9z" fill="#2c84e4" stroke="#0e4fa0" strokeWidth=".7" /></Svg>
                </button>
                <button aria-label="Налаштувати" className="flex h-6 w-[26px] items-center justify-center">
                  <Svg><path d="M0 4.500V1l3 .5Q6 0 9 .5q5 0 7 5l-2 .5q-2-2.500-4-1.500H6Q4 3 0 4.500z" fill="#c8c8c8" stroke="#606060" strokeWidth=".9" /><path d="M6.500 5h3v6h-3z" fill="#ddd" stroke="#777" strokeWidth=".8" /><path d="M6 11h4v4.500H6z" fill="#2a7ed8" stroke="#345" strokeWidth=".6" /></Svg>
                </button>
              </div>
            </div>
            <div className="flex min-h-0 flex-1 overflow-hidden pl-px">
              <div className="min-w-0 flex-1 overflow-hidden border-r border-black"><BalanceTable /></div>
              <div className="flex shrink-0 pr-[2px] pl-[2px]"><Scrollbar /></div>
            </div>
          </div>
        </main>

        <aside className="mt-[2px] mr-[3px] ml-[3px] flex h-24 w-[30px] shrink-0 flex-col items-center rounded-b-[6px] border border-white pt-[5px]">
          <span className="h-[3px] w-6 border-b-2 border-t border-t-white border-b-[#8f8c89]" />
          <button aria-label="Відновити" className="mt-[10px]">
            <svg viewBox="0 0 8 8" className="size-2" fill="#fff" stroke="#6b6360" aria-hidden="true"><path d="M2.500.5h5v4h-5z" /><path d="M.5 3.500h5v4h-5z" /><path d="M0 4h6" /></svg>
          </button>
          <button aria-label="Робочий стіл" className="mt-[14px]"><AppIcon /></button>
          <button aria-label="Баланс" className="mt-[10px]"><BarsIcon /></button>
        </aside>
      </div>

      <div className="flex h-[35px] shrink-0 items-center border-b border-[#979390] pl-[6px]">
        <Grip tall />
        <svg viewBox="0 0 16 14" className="ml-[10px] h-[14px] w-4" aria-hidden="true">
          <rect x="1.500" y="2.500" width="5" height="11" fill="#f6f8fc" stroke="#8a9090" />
          <path d="M1 3h6" stroke="#3c7cc0" strokeWidth="2.500" />
          <path d="m11 0 1.500 2.500L15 4l-2.500 1.500L11 8 9.500 5.500 7 4l2.500-1.500z" fill="#f8e070" stroke="#a88010" strokeWidth=".9" />
        </svg>
        <p className="mb-1 ml-12">Печать…</p>
        <div role="progressbar" aria-label="Печать" className="mr-[6px] mb-px ml-auto h-[19px] w-[149px] rounded-[4px] border border-[#a5a29f] bg-linear-to-b from-[#bcbab8] to-[#cbc8c6]" />
        <span className="mr-[356px] flex"><Grip tall /></span>
      </div>

      <Taskbar />

      {dialog && <ErrorDialog onClose={() => setDialog(false)} />}
    </div>
  )
}
